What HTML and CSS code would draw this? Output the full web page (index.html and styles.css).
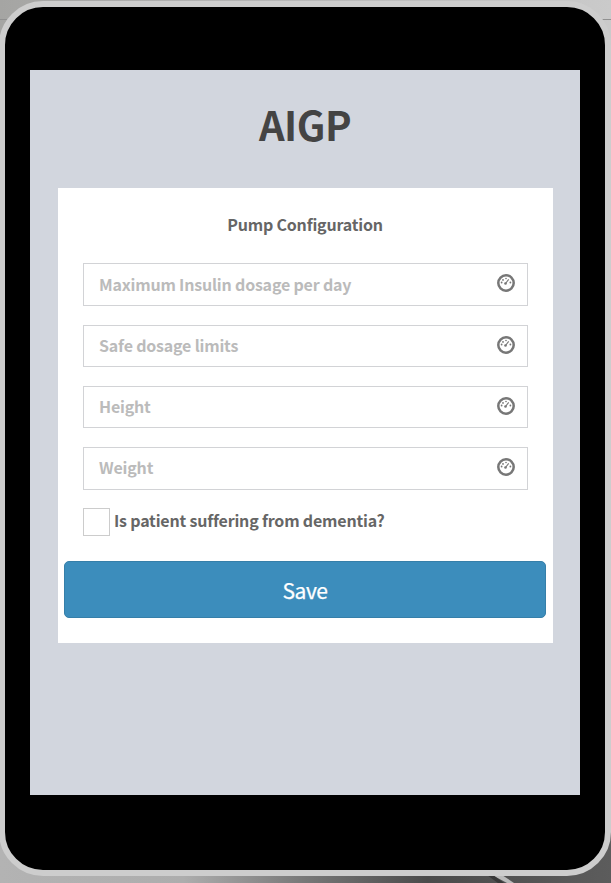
FILE: index.html
```
<!DOCTYPE html>
<html lang="en">
<head>
<meta charset="utf-8">
<title>AIGP</title>
<link rel="stylesheet" href="styles.css">
</head>
<body>
<svg class="backdrop" width="611" height="883" viewBox="0 0 611 883" aria-hidden="true">
  <defs>
    <linearGradient id="floor"><stop offset="0" stop-color="#b3b3b3"/><stop offset=".3" stop-color="#adadad"/><stop offset=".5" stop-color="#777"/><stop offset=".7" stop-color="#4b4b4b"/><stop offset="1" stop-color="#5c5c5c"/></linearGradient>
    <linearGradient id="wall"><stop offset="0" stop-color="#a5a5a3"/><stop offset=".4" stop-color="#b5b5b5"/><stop offset="1" stop-color="#cacaca"/></linearGradient>
  </defs>
  <path fill="url(#wall)" d="M0 0h611v450H0z"/>
  <path fill="url(#floor)" d="M0 450h611v433H0z"/>
  <path stroke="#909090" d="M0 19.500h8M601 19.500h10"/>
  <path fill="#bbb" d="M492 875h10l12 8h-7z"/>
  <path fill="#383838" d="M487 875h6l11 8h-6z"/>
</svg>
<main class="tablet">
  <div class="screen">
    <h1 class="logo">AIGP</h1>
    <form class="card">
      <p class="heading">Pump Configuration</p>
      <div class="fields">
        <label class="field"><span>Maximum Insulin dosage per day</span><svg class="gauge" viewBox="0 0 20 20"><use href="#dial"/></svg></label>
        <label class="field"><span>Safe dosage limits</span><svg class="gauge" viewBox="0 0 20 20"><use href="#dial"/></svg></label>
        <label class="field"><span>Height</span><svg class="gauge" viewBox="0 0 20 20"><use href="#dial"/></svg></label>
        <label class="field"><span>Weight</span><svg class="gauge" viewBox="0 0 20 20"><use href="#dial"/></svg></label>
      </div>
      <label class="check"><i class="box"></i><span>Is patient suffering from dementia?</span></label>
      <button class="save" type="button"><span>Save</span></button>
    </form>
  </div>
</main>
<svg class="symbols" aria-hidden="true">
  <symbol id="dial" viewBox="0 0 20 20">
    <circle cx="10" cy="10" r="7.700" fill="none" stroke="#777" stroke-width="2.500"/>
    <g fill="#777"><circle cx="5.600" cy="9.500" r=".9"/><circle cx="7" cy="6.900" r=".9"/><circle cx="10" cy="5.500" r=".8"/><circle cx="14.400" cy="9.500" r=".9"/><circle cx="9.500" cy="10.500" r="1.300"/></g>
    <path d="M9.500 10.500l3.200-4.200" stroke="#777" stroke-width="1.100"/>
  </symbol>
</svg>
</body>
</html>
```
FILE: styles.css
```
* { box-sizing: border-box; }
body {
  margin: 0;
  width: 611px;
  height: 883px;
  overflow: hidden;
  font-family: "Noto Sans CJK SC", "Noto Sans", sans-serif;
  font-size: 16px;
  font-weight: 700;
  letter-spacing: -0.19px;
  color: #666;
}
.backdrop { position: absolute; left: 0; top: 0; z-index: -1; }
.symbols { position: absolute; width: 0; height: 0; }
.tablet {
  width: 612px;
  height: 875px;
  margin: 1px 0 0 -1px;
  padding: 63px 25px 75px;
  border: 6px solid #cdcdcd;
  border-radius: 44px;
  background: #000;
}
.screen {
  width: 550px;
  height: 725px;
  padding: 28px 27px 0 28px;
  background: #d2d6de;
}
.logo {
  margin: 0 0 38px;
  padding-right: 1px;
  height: 52px;
  line-height: 52px;
  font-size: 40px;
  letter-spacing: -0.5px;
  text-align: center;
  color: #444;
}
.card {
  height: 455px;
  padding: 24px 25px 0;
  background: #fff;
}
.heading {
  margin: 0 0 27px;
  padding-right: 1px;
  height: 24px;
  line-height: 24px;
  text-align: center;
}
.fields {
  display: grid;
  grid-template-rows: 43px 42px 42px 43px;
  gap: 19px;
}
.field {
  display: flex;
  align-items: center;
  justify-content: space-between;
  padding: 0 11px 0 15px;
  border: 1px solid #d2d3d6;
  line-height: 24px;
  color: #bbb;
}
.field span { margin-bottom: 2px; }
.field:last-child span { margin-bottom: 3px; }
.gauge { width: 20px; height: 20px; margin-bottom: 3px; }
.check {
  display: flex;
  align-items: center;
  gap: 4px;
  height: 28px;
  margin-top: 18px;
}
.check span { margin-bottom: 5px; }
.box {
  width: 27px;
  height: 28px;
  border: 1px solid #ccc;
}
.save {
  display: block;
  width: 482px;
  height: 57px;
  margin: 25px 0 0 -19px;
  padding: 0;
  border: 1px solid #367fa9;
  border-radius: 5px;
  background: #3c8dbc;
  color: #fff;
  font: 400 21px/30px "Noto Sans CJK SC", "Noto Sans", sans-serif;
  letter-spacing: -0.4px;
  -webkit-text-stroke: 0.25px #fff;
}
```
